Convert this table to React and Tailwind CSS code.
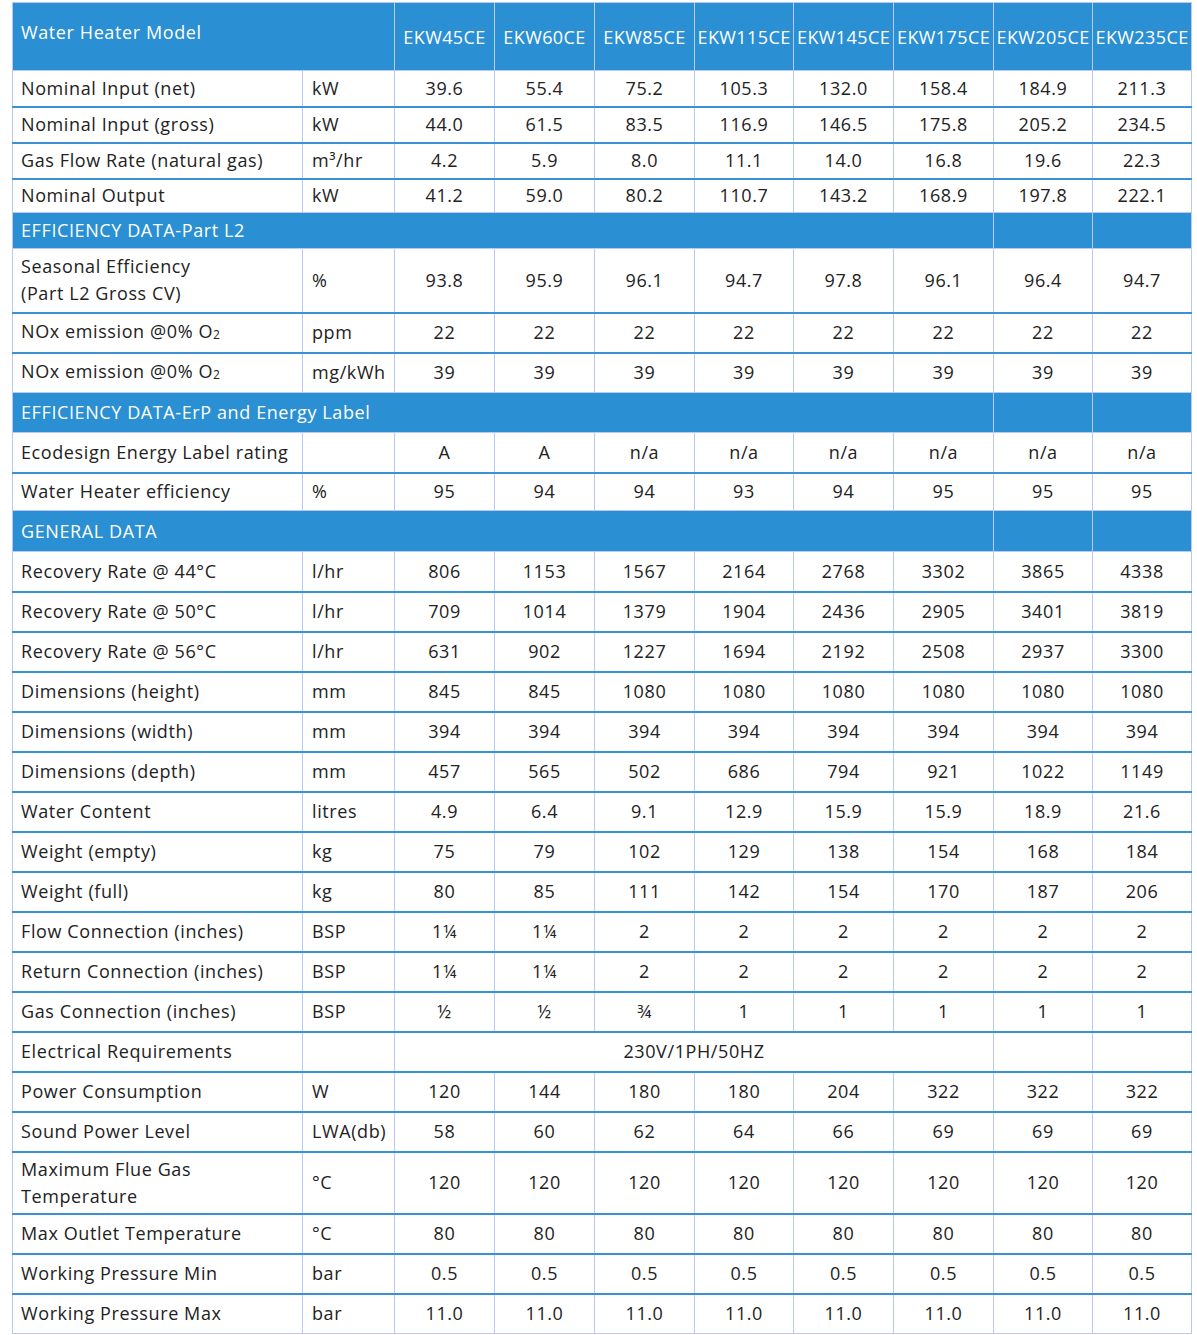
const models = ["EKW45CE", "EKW60CE", "EKW85CE", "EKW115CE", "EKW145CE", "EKW175CE", "EKW205CE", "EKW235CE"];

const O2 = (
  <>
    NOx emission @0% O<span className="text-[12px] align-[-1px]">2</span>
  </>
);

const rows = [
  { label: "Nominal Input (net)", unit: "kW", h: 36, vals: ["39.6", "55.4", "75.2", "105.3", "132.0", "158.4", "184.9", "211.3"] },
  { label: "Nominal Input (gross)", unit: "kW", h: 36, vals: ["44.0", "61.5", "83.5", "116.9", "146.5", "175.8", "205.2", "234.5"] },
  { label: "Gas Flow Rate (natural gas)", unit: "m³/hr", h: 36, vals: ["4.2", "5.9", "8.0", "11.1", "14.0", "16.8", "19.6", "22.3"] },
  { label: "Nominal Output", unit: "kW", h: 34, vals: ["41.2", "59.0", "80.2", "110.7", "143.2", "168.9", "197.8", "222.1"] },
  { section: "EFFICIENCY DATA-Part L2", h: 36 },
  {
    label: (
      <>
        Seasonal Efficiency
        <br />
        (Part L2 Gross CV)
      </>
    ),
    unit: "%",
    h: 64,
    vals: ["93.8", "95.9", "96.1", "94.7", "97.8", "96.1", "96.4", "94.7"],
  },
  { label: O2, unit: "ppm", h: 40, vals: ["22", "22", "22", "22", "22", "22", "22", "22"] },
  { label: O2, unit: "mg/kWh", h: 40, vals: ["39", "39", "39", "39", "39", "39", "39", "39"] },
  { section: "EFFICIENCY DATA-ErP and Energy Label", h: 40 },
  { label: "Ecodesign Energy Label rating", unit: "", h: 40, vals: ["A", "A", "n/a", "n/a", "n/a", "n/a", "n/a", "n/a"] },
  { label: "Water Heater efficiency", unit: "%", h: 38, vals: ["95", "94", "94", "93", "94", "95", "95", "95"] },
  { section: "GENERAL DATA", h: 41 },
  { label: "Recovery Rate @ 44°C", unit: "l/hr", h: 40, vals: ["806", "1153", "1567", "2164", "2768", "3302", "3865", "4338"] },
  { label: "Recovery Rate @ 50°C", unit: "l/hr", h: 40, vals: ["709", "1014", "1379", "1904", "2436", "2905", "3401", "3819"] },
  { label: "Recovery Rate @ 56°C", unit: "l/hr", h: 40, vals: ["631", "902", "1227", "1694", "2192", "2508", "2937", "3300"] },
  { label: "Dimensions (height)", unit: "mm", h: 40, vals: ["845", "845", "1080", "1080", "1080", "1080", "1080", "1080"] },
  { label: "Dimensions (width)", unit: "mm", h: 40, vals: ["394", "394", "394", "394", "394", "394", "394", "394"] },
  { label: "Dimensions (depth)", unit: "mm", h: 40, vals: ["457", "565", "502", "686", "794", "921", "1022", "1149"] },
  { label: "Water Content", unit: "litres", h: 40, vals: ["4.9", "6.4", "9.1", "12.9", "15.9", "15.9", "18.9", "21.6"] },
  { label: "Weight (empty)", unit: "kg", h: 40, vals: ["75", "79", "102", "129", "138", "154", "168", "184"] },
  { label: "Weight (full)", unit: "kg", h: 40, vals: ["80", "85", "111", "142", "154", "170", "187", "206"] },
  { label: "Flow Connection (inches)", unit: "BSP", h: 40, vals: ["1¼", "1¼", "2", "2", "2", "2", "2", "2"] },
  { label: "Return Connection (inches)", unit: "BSP", h: 40, vals: ["1¼", "1¼", "2", "2", "2", "2", "2", "2"] },
  { label: "Gas Connection (inches)", unit: "BSP", h: 40, vals: ["½", "½", "¾", "1", "1", "1", "1", "1"] },
  { label: "Electrical Requirements", unit: "", h: 40, span: "230V/1PH/50HZ" },
  { label: "Power Consumption", unit: "W", h: 40, vals: ["120", "144", "180", "180", "204", "322", "322", "322"] },
  { label: "Sound Power Level", unit: "LWA(db)", h: 40, vals: ["58", "60", "62", "64", "66", "69", "69", "69"] },
  {
    label: (
      <>
        Maximum Flue Gas
        <br />
        Temperature
      </>
    ),
    unit: "°C",
    h: 62,
    vals: ["120", "120", "120", "120", "120", "120", "120", "120"],
  },
  { label: "Max Outlet Temperature", unit: "°C", h: 40, vals: ["80", "80", "80", "80", "80", "80", "80", "80"] },
  { label: "Working Pressure Min", unit: "bar", h: 40, vals: ["0.5", "0.5", "0.5", "0.5", "0.5", "0.5", "0.5", "0.5"] },
  { label: "Working Pressure Max", unit: "bar", h: 40, vals: ["11.0", "11.0", "11.0", "11.0", "11.0", "11.0", "11.0", "11.0"] },
];

const widths = [290, 92, 100, 100, 100, 99, 100, 100, 99, 99];

export default function App() {
  return (
    <div className="min-h-[1335px] bg-white pt-[2px] pl-[12px] font-['Open_Sans',sans-serif] text-[18px] tracking-[0.6px] text-[#222]">
      <table className="w-[1179px] table-fixed border-collapse border border-[#b9c9f1]">
        <colgroup>
          {widths.map((w, i) => (
            <col key={i} style={{ width: w }} />
          ))}
        </colgroup>
        <thead>
          <tr className="h-[68px] bg-[#2a8fd3] text-white">
            <th colSpan={2} className="border border-[#b9c9f1] pb-[8px] pl-[8px] text-left font-normal">
              Water Heater Model
            </th>
            {models.map((m) => (
              <th key={m} className="border border-[#b9c9f1] pt-[2px] text-center font-normal tracking-[0.4px] whitespace-nowrap">
                {m}
              </th>
            ))}
          </tr>
        </thead>
        <tbody>
          {rows.map((r, i) => {
            const prev = rows[i - 1];
            const top = !r.section && prev && !prev.section ? "border-t-2 border-t-[#3a92d5]" : "";
            const cell = `border-x border-b border-[#b9c9f1] ${top}`;
            if (r.section) {
              return (
                <tr key={i} className="bg-[#2a8fd3] text-white" style={{ height: r.h }}>
                  <td colSpan={8} className="border border-[#b9c9f1] pl-[8px] text-left">
                    {r.section}
                  </td>
                  <td className="border border-[#b9c9f1]" />
                  <td className="border border-[#b9c9f1]" />
                </tr>
              );
            }
            return (
              <tr key={i} style={{ height: r.h }}>
                <td className={`${cell} pl-[8px] leading-[27px]`}>{r.label}</td>
                <td className={`${cell} pl-[9px] whitespace-nowrap`}>{r.unit}</td>
                {r.span ? (
                  <>
                    <td colSpan={6} className={`${cell} text-center`}>
                      {r.span}
                    </td>
                    <td className={cell} />
                    <td className={cell} />
                  </>
                ) : (
                  r.vals.map((v, j) => (
                    <td key={j} className={`${cell} text-center`}>
                      {v}
                    </td>
                  ))
                )}
              </tr>
            );
          })}
        </tbody>
      </table>
    </div>
  );
}
